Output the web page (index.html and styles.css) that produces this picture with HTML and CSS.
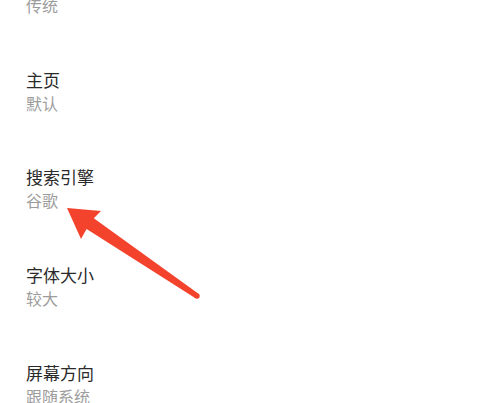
FILE: index.html
```html
<!DOCTYPE html>
<html lang="zh-CN">
<head>
<meta charset="utf-8">
<title>设置</title>
<link rel="stylesheet" href="styles.css">
</head>
<body>
<div class="screen">
  <ul class="list">
    <li class="item item-partial">
      <div class="sub">传统</div>
    </li>
    <li class="item">
      <div class="title">主页</div>
      <div class="sub">默认</div>
    </li>
    <li class="item">
      <div class="title">搜索引擎</div>
      <div class="sub">谷歌</div>
    </li>
    <li class="item">
      <div class="title">字体大小</div>
      <div class="sub">较大</div>
    </li>
    <li class="item">
      <div class="title">屏幕方向</div>
      <div class="sub">跟随系统</div>
    </li>
  </ul>
  <svg class="arrow" width="495" height="403" viewBox="0 0 495 403" aria-hidden="true">
    <polygon fill="#f4432c" points="67,208 101,211 93.8,218.2 198.5,293.8 195.5,298.2 86.6,229 81,239"/>
    <circle fill="#f4432c" cx="197" cy="296" r="2.7"/>
  </svg>
</div>
</body>
</html>
```

FILE: styles.css
```css
html, body {
  margin: 0;
  padding: 0;
  background: #ffffff;
}

.screen {
  position: relative;
  width: 495px;
  height: 403px;
  overflow: hidden;
  font-family: "Noto Sans CJK SC", "Noto Sans", sans-serif;
}

.list {
  list-style: none;
  margin: 0;
  padding: 0 0 0 26px;
  display: flex;
  flex-direction: column;
}

.item {
  display: flex;
  flex-direction: column;
  gap: 2px;
  padding-bottom: 53.7px;
}

.item-partial {
  margin-top: -5px;
}

.title {
  font-size: 17px;
  line-height: 22px;
  color: #2a2a2a;
}

.sub {
  font-size: 16px;
  line-height: 20px;
  color: #9c9c9c;
}

.arrow {
  position: absolute;
  top: 0;
  left: 0;
}
```
